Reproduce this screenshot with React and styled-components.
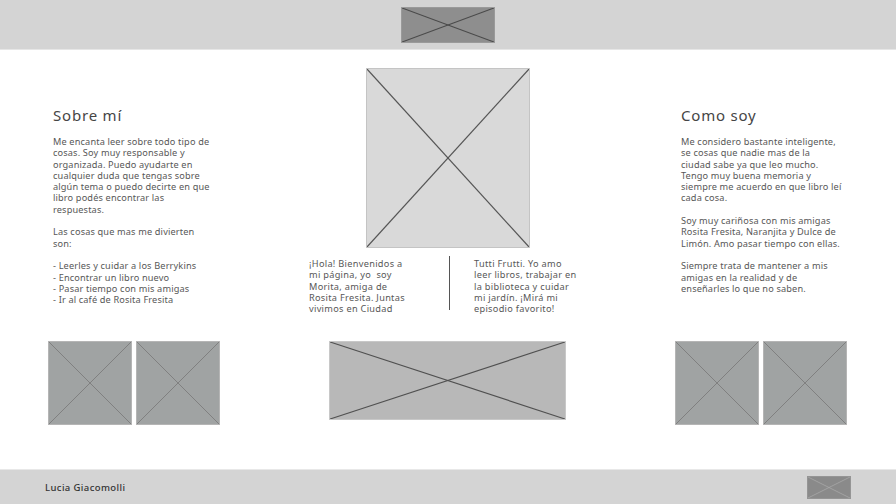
import React from 'react';
import styled, { createGlobalStyle } from 'styled-components';

const GlobalStyle = createGlobalStyle`
  html, body {
    margin: 0;
    padding: 0;
    background: #ffffff;
  }
  body {
    font-family: "Noto Sans", "DejaVu Sans", sans-serif;
    color: #555555;
  }
`;

// Text content, one entry per printed line
const aboutLines = [
  'Me encanta leer sobre todo tipo de',
  'cosas. Soy muy responsable y',
  'organizada. Puedo ayudarte en',
  'cualquier duda que tengas sobre',
  'algún tema o puedo decirte en que',
  'libro podés encontrar las',
  'respuestas.',
  '',
  'Las cosas que mas me divierten',
  'son:',
  '',
  '- Leerles y cuidar a los Berrykins',
  '- Encontrar un libro nuevo',
  '- Pasar tiempo con mis amigas',
  '- Ir al café de Rosita Fresita',
];

const howLines = [
  'Me considero bastante inteligente,',
  'se cosas que nadie mas de la',
  'ciudad sabe ya que leo mucho.',
  'Tengo muy buena memoria y',
  'siempre me acuerdo en que libro leí',
  'cada cosa.',
  '',
  'Soy muy cariñosa con mis amigas',
  'Rosita Fresita, Naranjita y Dulce de',
  'Limón. Amo pasar tiempo con ellas.',
  '',
  'Siempre trata de mantener a mis',
  'amigas en la realidad y de',
  'enseñarles lo que no saben.',
];

const introLeft = [
  '¡Hola! Bienvenidos a',
  'mi página, yo  soy',
  'Morita, amiga de',
  'Rosita Fresita. Juntas',
  'vivimos en Ciudad',
];

const introRight = [
  'Tutti Frutti. Yo amo',
  'leer libros, trabajar en',
  'la biblioteca y cuidar',
  'mi jardín. ¡Mirá mi',
  'episodio favorito!',
];

const Page = styled.div`
  width: 896px;
  height: 504px;
  display: flex;
  flex-direction: column;
  overflow: hidden;
`;

const TopBar = styled.header`
  height: 49px;
  flex-shrink: 0;
  background: #d4d4d4;
  border-bottom: 1px solid #e6e6e6;
  display: flex;
  align-items: center;
  justify-content: center;
`;

const Main = styled.main`
  flex: 1;
  display: grid;
  grid-template-columns: 172px 1fr 172px;
  grid-template-rows: 291px auto;
  padding: 0 49px 0 48px;
`;

const SideText = styled.section`
  padding: 56px 0 0 ${p => p.$indent}px;
`;

const Title = styled.h2`
  margin: 0 0 12px;
  font-size: 15px;
  line-height: 18px;
  font-weight: 400;
  letter-spacing: 0.8px;
  color: #454545;
`;

const Paragraph = styled.p`
  margin: 0;
  font-size: 9.2px;
  line-height: 11.3px;
  white-space: pre;
  color: #575757;
  letter-spacing: ${p => p.$spacing}px;
`;

const Center = styled.section`
  display: flex;
  flex-direction: column;
  align-items: center;
  padding-top: 18px;
`;

const Intro = styled.div`
  display: flex;
  align-items: flex-start;
  gap: 24px;
  margin-top: 8px;
`;

const IntroCol = styled.div`
  width: ${p => p.$width}px;
  padding-top: 2px;
`;

const Divider = styled.div`
  width: 1px;
  height: 54px;
  background: #555555;
`;

const ImageRow = styled.div`
  display: flex;
  gap: 4px;
  justify-content: ${p => p.$justify || 'flex-start'};
`;

const Frame = styled.div`
  width: ${p => p.$w}px;
  height: ${p => p.$h}px;
  flex-shrink: 0;
  box-sizing: border-box;
  background: ${p => p.$fill};
  border: 1px solid ${p => p.$border};

  svg {
    display: block;
    width: 100%;
    height: 100%;
  }
`;

const BottomBar = styled.footer`
  height: 34px;
  flex-shrink: 0;
  background: #d4d4d4;
  border-top: 1px solid #e8e8e8;
  display: flex;
  align-items: center;
  justify-content: space-between;
  padding: 0 45px;
`;

const Author = styled.span`
  font-size: 9.5px;
  font-weight: 500;
  letter-spacing: 0.4px;
  color: #333333;
`;

// Wireframe image placeholder: box with a cross
const Placeholder = ({ w, h, fill, border, stroke, width = 1.2 }) => (
  <Frame $w={w} $h={h} $fill={fill} $border={border}>
    <svg viewBox={`0 0 ${w} ${h}`} preserveAspectRatio="none">
      <line x1="0" y1="0" x2={w} y2={h} stroke={stroke} strokeWidth={width} />
      <line x1={w} y1="0" x2="0" y2={h} stroke={stroke} strokeWidth={width} />
    </svg>
  </Frame>
);

const Lines = ({ lines, spacing = 0.15 }) => (
  <Paragraph $spacing={spacing}>{lines.join('\n')}</Paragraph>
);

const App = () => {
  return (
    <>
      <GlobalStyle />
      <Page>
        <TopBar>
          <Placeholder w={94} h={36} fill="#8e8e8e" border="#9a9a9a" stroke="#4a4a4a" />
        </TopBar>

        <Main>
          <SideText $indent={5}>
            <Title>Sobre mí</Title>
            <Lines lines={aboutLines} />
          </SideText>

          <Center>
            <Placeholder w={164} h={180} fill="#d9d9d9" border="#c4c4c4" stroke="#555555" />
            <Intro>
              <IntroCol $width={116}>
                <Lines lines={introLeft} spacing={0.3} />
              </IntroCol>
              <Divider />
              <IntroCol $width={112}>
                <Lines lines={introRight} spacing={0.3} />
              </IntroCol>
            </Intro>
          </Center>

          <SideText $indent={6}>
            <Title>Como soy</Title>
            <Lines lines={howLines} />
          </SideText>

          <ImageRow>
            <Placeholder w={84} h={84} fill="#a0a3a3" border="#b5b5b5" stroke="#777777" width={0.8} />
            <Placeholder w={84} h={84} fill="#a0a3a3" border="#b5b5b5" stroke="#777777" width={0.8} />
          </ImageRow>

          <ImageRow $justify="center">
            <Placeholder w={237} h={79} fill="#b8b8b8" border="#c8c8c8" stroke="#505050" />
          </ImageRow>

          <ImageRow>
            <Placeholder w={84} h={84} fill="#a0a3a3" border="#b5b5b5" stroke="#777777" width={0.8} />
            <Placeholder w={84} h={84} fill="#a0a3a3" border="#b5b5b5" stroke="#777777" width={0.8} />
          </ImageRow>
        </Main>

        <BottomBar>
          <Author>Lucia Giacomolli</Author>
          <Placeholder w={44} h={23} fill="#8a8a8a" border="#959595" stroke="#aaaaaa" width={0.8} />
        </BottomBar>
      </Page>
    </>
  );
};

export default App;
